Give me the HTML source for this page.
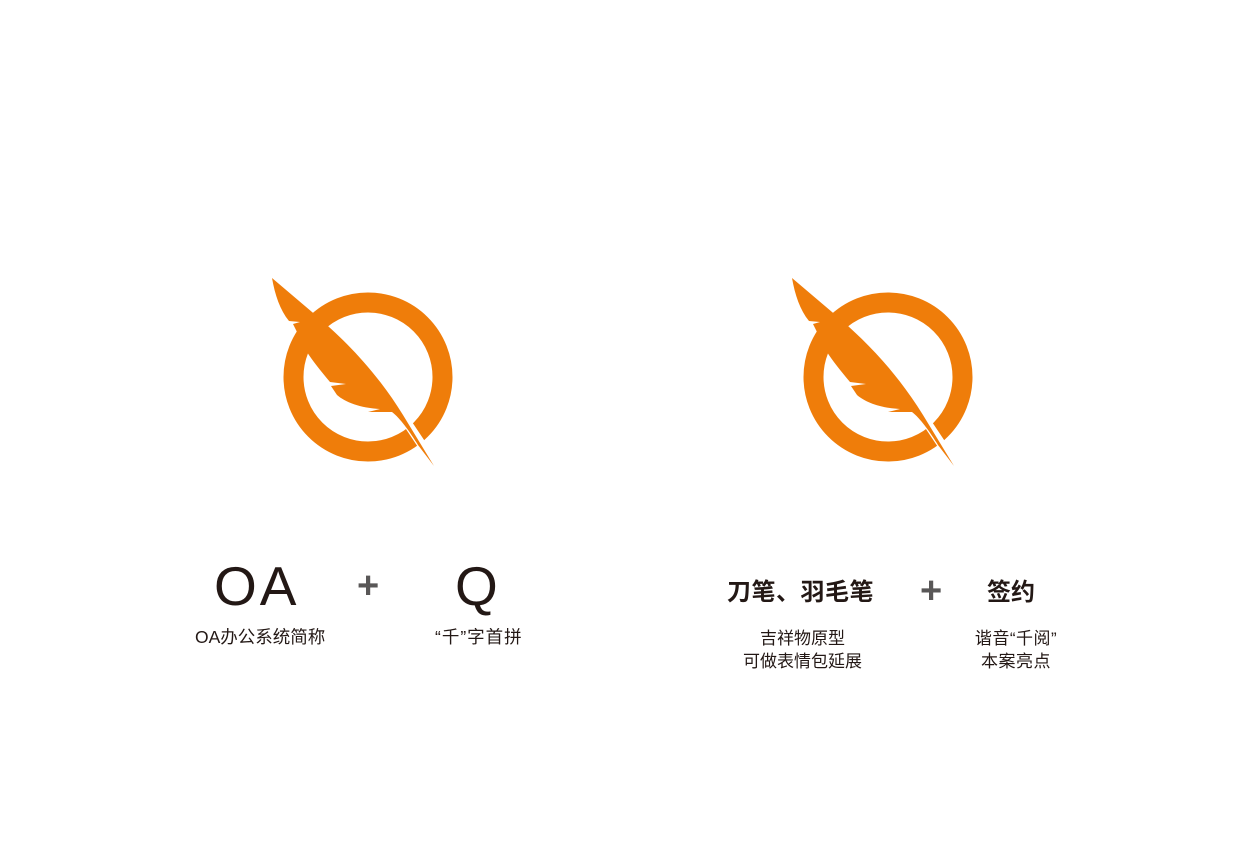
<!DOCTYPE html>
<html><head><meta charset="utf-8"><style>
body{margin:0;width:1240px;height:868px;background:#fff;position:relative;overflow:hidden;font-family:"Liberation Sans","Noto Sans CJK SC",sans-serif;color:#231815}
.a{position:absolute;white-space:nowrap}
</style></head><body>
<svg width="1240" height="868" style="position:absolute;left:0;top:0">
<defs>
<g id="logo">
<circle cx="368" cy="377" r="74.5" fill="none" stroke="#EF7D0A" stroke-width="20"/>
<line x1="392" y1="400" x2="440" y2="472" stroke="#fff" stroke-width="9"/>
<path fill="#EF7D0A" d="M272,278 L312,312 C345,340 375,370 403,415 L434,466 L418,445 C410,432 400,418 392,412 L368,412 L380,409 C360,408 345,402 337,395 L331,386 L346,384 L330,382 C320,370 312,360 307,352 L293,324 L300,322 L289,321 C280,310 275,295 272,278 Z"/>
</g>
</defs>
<use href="#logo"/>
<use href="#logo" x="520"/>
</svg>
<div class="a" style="left:214px;top:558px;font-size:55px;line-height:56px;letter-spacing:3px">OA</div>
<div class="a" style="left:357px;top:566px;font-size:38px;line-height:40px;color:#595757;font-weight:bold">+</div>
<div class="a" style="left:455px;top:558px;font-size:55px;line-height:56px">Q</div>
<div class="a" style="left:195px;top:627px;font-size:17.5px;line-height:20px">OA办公系统简称</div>
<div class="a" style="left:435px;top:627px;font-size:17.5px;line-height:20px;letter-spacing:1px">“千”字首拼</div>
<div class="a" style="left:727px;top:578px;font-size:24px;line-height:30px;font-weight:bold;letter-spacing:0.5px">刀笔、羽毛笔</div>
<div class="a" style="left:920px;top:571px;font-size:38px;line-height:40px;color:#595757;font-weight:bold">+</div>
<div class="a" style="left:987px;top:578px;font-size:24px;line-height:30px;font-weight:bold">签约</div>
<div class="a" style="left:735px;top:627px;width:135px;text-align:center;font-size:17px;line-height:23px">吉祥物原型<br>可做表情包延展</div>
<div class="a" style="left:961px;top:627px;width:110px;text-align:center;font-size:17px;line-height:23px;letter-spacing:0.5px">谐音“千阅”<br>本案亮点</div>
</body></html>
